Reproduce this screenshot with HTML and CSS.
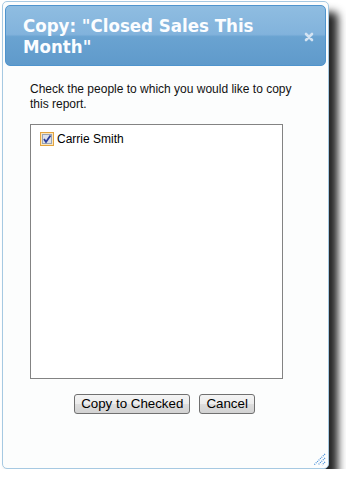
FILE: index.html
```html
<!DOCTYPE html>
<html>
<head>
<meta charset="utf-8">
<link rel="stylesheet" href="styles.css">
</head>
<body>
<div class="dialog">
  <div class="header">
    <div class="title">Copy: "Closed Sales This Month"</div>
    <span class="close"><svg width="10" height="10" viewBox="0 0 10 10"><path d="M2 2 L8 8 M8 2 L2 8" stroke="#d3e3f2" stroke-width="2.6" stroke-linecap="round"/></svg></span>
  </div>
  <div class="content">
    <p class="intro">Check the people to which you would like to copy this report.</p>
    <div class="list">
      <label class="item">
        <span class="cb"><svg width="14" height="14" viewBox="0 0 14 14"><rect x="0.5" y="0.5" width="13" height="13" fill="#fbe6bd" stroke="#e3a43f"/><rect x="2.5" y="2.5" width="9" height="9" fill="#dde1ea" stroke="#9aa3b3"/><path d="M4 7 L6 10 L10.5 3.5" fill="none" stroke="#2a3c9a" stroke-width="1.8"/></svg></span>
        <span class="name">Carrie Smith</span>
      </label>
    </div>
  </div>
  <div class="buttons">
    <button class="btn">Copy to Checked</button>
    <button class="btn">Cancel</button>
  </div>
  <span class="grip"><svg width="13" height="13" viewBox="0 0 13 13"><path d="M12 1 L1 12 M12 5 L5 12 M12 9 L9 12" stroke="#3f8ad6" stroke-width="1.2" stroke-dasharray="1 1"/></svg></span>
</div>
</body>
</html>
```
FILE: styles.css
```css
html, body {
  margin: 0;
  background: #ffffff;
}
body {
  font-family: "Liberation Sans", Arial, sans-serif;
}
.dialog {
  position: relative;
  margin: 1px 0 0 2px;
  width: 327px;
  height: 468px;
  box-sizing: border-box;
  border: 1px solid #a6c9e2;
  border-radius: 5px;
  background: #fcfdfd;
  padding: 3px 2px;
  box-shadow: 9px 11px 8px rgba(0, 0, 0, 0.85);
  display: flex;
  flex-direction: column;
}
.header {
  height: 61px;
  box-sizing: border-box;
  border: 1px solid #4f94cd;
  border-radius: 5px;
  background: linear-gradient(to bottom, #8fbde1 0%, #82b3dc 48%, #6aa3d1 52%, #5f9acb 100%);
  padding: 9px 11px 8px 17px;
  display: flex;
  align-items: center;
  color: #fbfdff;
}
.title {
  flex: 0 1 270px;
  font-family: "DejaVu Sans Condensed", "DejaVu Sans", sans-serif;
  font-stretch: condensed;
  font-weight: bold;
  font-size: 18.5px;
  line-height: 21px;
}
.close {
  margin-left: auto;
  display: flex;
  margin-top: 2px;
}
.content {
  padding: 16px 0 0 25px;
}
.intro {
  margin: 0;
  width: 275px;
  font-size: 12px;
  line-height: 15px;
  color: #111111;
}
.list {
  margin-top: 12px;
  width: 253px;
  height: 255px;
  box-sizing: border-box;
  border: 1px solid #838383;
  background: #ffffff;
  padding: 7px 0 0 9px;
}
.item {
  display: flex;
  align-items: center;
  gap: 3px;
  font-size: 12px;
  line-height: 14px;
  color: #000000;
}
.cb {
  display: flex;
}
.buttons {
  margin-top: 15px;
  display: flex;
  justify-content: center;
  gap: 9px;
  padding-right: 2px;
}
.btn {
  font-family: "Liberation Sans", Arial, sans-serif;
  font-size: 13.333px;
  height: 20px;
  padding: 0 6px;
  border: 1px solid #707070;
  border-radius: 3px;
  background: linear-gradient(to bottom, #f4f4f4 0%, #ececec 50%, #dedede 50%, #d2d2d2 100%);
  color: #000000;
  line-height: 16px;
}
.grip {
  position: absolute;
  right: 2px;
  bottom: 2px;
  display: flex;
}
```
